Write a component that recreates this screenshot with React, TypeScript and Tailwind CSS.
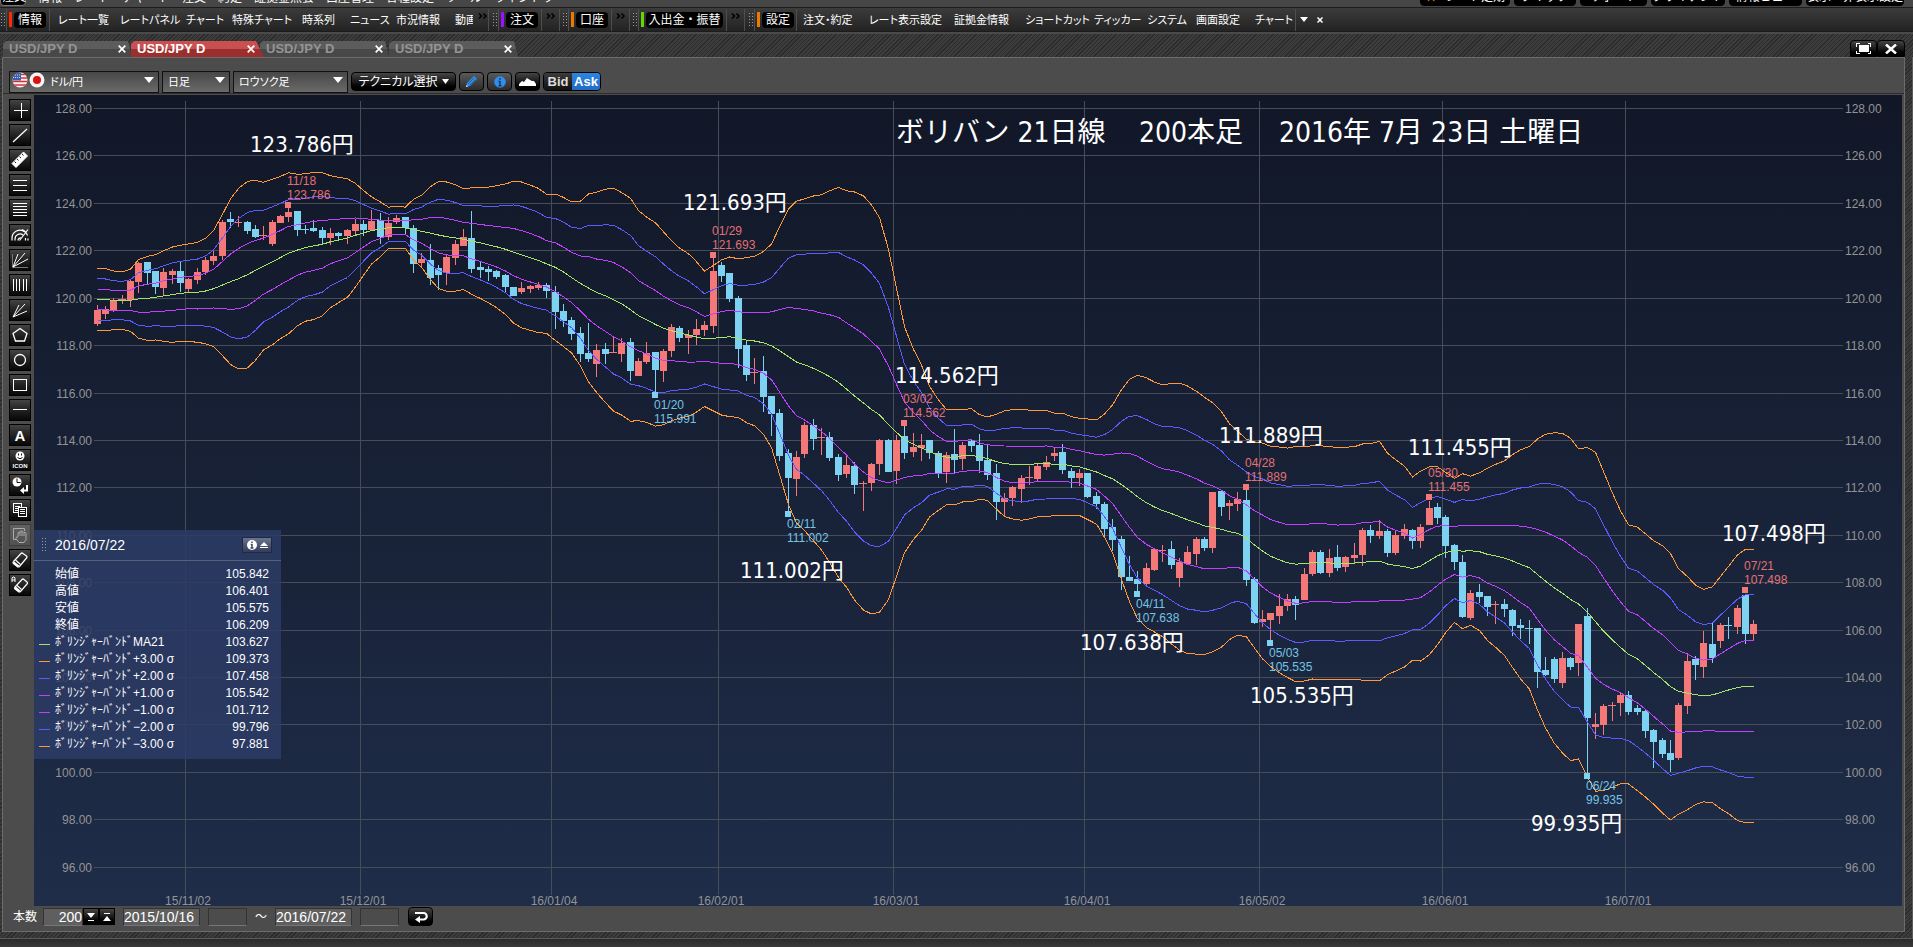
import { ReactNode } from 'react'
import clsx from 'clsx'

// [direction, high, body top, body bottom, low] in canvas pixels, 1 = up day, 0 = down day
type Candle = [number, number, number, number, number]

const CANDLES: Candle[] = [
  [1, 210, 215, 229, 231], [1, 211, 214, 219, 224], [1, 203, 205, 216, 217], [1, 200, 204, 205, 209],
  [1, 185, 186, 205, 212], [1, 167, 168, 187, 198], [0, 167, 167, 178, 189], [0, 176, 176, 192, 199],
  [1, 173, 177, 193, 201], [1, 174, 176, 180, 189], [0, 167, 176, 188, 197], [1, 183, 184, 194, 198],
  [1, 173, 177, 185, 189], [1, 162, 165, 177, 180], [1, 154, 161, 166, 170], [1, 125, 127, 161, 165],
  [0, 117, 124, 127, 133], [1, 121, 127, 128, 132], [0, 126, 127, 136, 139], [0, 130, 134, 142, 143],
  [1, 131, 140, 141, 145], [1, 125, 127, 149, 151], [1, 120, 121, 128, 128], [1, 113, 117, 122, 127],
  [0, 116, 116, 135, 141], [0, 130, 134, 135, 139], [0, 125, 133, 136, 137], [0, 132, 135, 143, 149],
  [1, 133, 138, 143, 150], [0, 137, 138, 141, 144], [1, 134, 135, 141, 149], [1, 124, 129, 136, 140],
  [0, 125, 129, 135, 141], [1, 115, 126, 135, 135], [0, 118, 125, 142, 149], [1, 122, 128, 142, 145],
  [1, 120, 123, 127, 129], [0, 122, 122, 133, 139], [0, 130, 133, 169, 178], [1, 158, 164, 168, 173],
  [0, 149, 165, 183, 190], [0, 170, 173, 180, 195], [1, 160, 162, 178, 190], [1, 145, 149, 163, 170],
  [1, 134, 142, 151, 151], [0, 116, 143, 174, 178], [0, 167, 172, 175, 183], [0, 171, 174, 177, 186],
  [0, 175, 176, 182, 184], [0, 179, 180, 192, 197], [0, 192, 192, 201, 201], [1, 187, 193, 197, 199],
  [1, 190, 191, 194, 198], [1, 187, 190, 193, 195], [0, 188, 190, 196, 203], [0, 191, 197, 217, 234],
  [0, 209, 216, 226, 232], [0, 222, 225, 239, 245], [0, 232, 238, 259, 267], [0, 228, 258, 264, 267],
  [1, 249, 255, 269, 282], [0, 248, 254, 259, 269], [1, 241, 257, 258, 258], [1, 243, 248, 259, 267],
  [0, 243, 247, 276, 286], [1, 263, 266, 281, 281], [1, 247, 258, 267, 269], [0, 257, 257, 275, 298],
  [1, 254, 256, 276, 287], [1, 229, 232, 256, 262], [0, 231, 233, 243, 247], [1, 235, 240, 243, 259],
  [1, 224, 234, 240, 250], [1, 226, 230, 235, 241], [1, 163, 176, 231, 238], [0, 167, 170, 181, 187],
  [0, 178, 178, 204, 207], [0, 201, 203, 254, 273], [0, 245, 250, 280, 286], [1, 263, 277, 278, 289],
  [0, 261, 276, 302, 317], [0, 301, 301, 319, 341], [0, 314, 318, 361, 366], [0, 354, 358, 383, 416],
  [1, 356, 362, 384, 401], [1, 327, 330, 359, 363], [0, 324, 330, 344, 355], [1, 333, 342, 343, 360],
  [0, 337, 342, 363, 366], [0, 359, 362, 380, 386], [1, 359, 370, 379, 383], [0, 367, 371, 390, 399],
  [1, 386, 388, 389, 416], [1, 368, 369, 388, 396], [1, 344, 345, 369, 380], [0, 344, 345, 377, 377],
  [1, 340, 345, 376, 389], [0, 331, 341, 358, 364], [1, 338, 352, 357, 362], [1, 339, 350, 353, 366],
  [0, 345, 345, 358, 364], [0, 356, 358, 378, 383], [1, 357, 360, 377, 388], [0, 334, 359, 365, 378],
  [1, 347, 350, 364, 375], [0, 344, 346, 351, 357], [0, 339, 350, 366, 378], [0, 350, 365, 380, 385],
  [0, 369, 378, 407, 425], [1, 398, 403, 407, 421], [1, 391, 392, 403, 411], [1, 380, 383, 394, 408],
  [1, 371, 382, 383, 390], [1, 369, 371, 384, 386], [1, 361, 367, 372, 375], [1, 353, 358, 361, 366],
  [0, 349, 357, 375, 379], [0, 373, 376, 383, 393], [1, 374, 378, 383, 391], [0, 378, 378, 402, 403],
  [0, 397, 401, 409, 414], [0, 407, 409, 434, 442], [0, 424, 432, 445, 456], [0, 441, 444, 482, 495],
  [0, 461, 482, 486, 486], [0, 476, 484, 489, 496], [1, 468, 473, 489, 490], [1, 453, 454, 475, 476],
  [1, 450, 455, 456, 467], [0, 446, 454, 470, 474], [1, 463, 467, 483, 492], [1, 451, 457, 469, 470],
  [1, 442, 444, 459, 470], [0, 442, 444, 453, 456], [1, 397, 397, 453, 458], [0, 395, 396, 412, 421],
  [1, 405, 408, 411, 425], [1, 397, 404, 409, 416], [0, 395, 405, 485, 491], [0, 482, 484, 528, 529],
  [1, 515, 524, 527, 532], [1, 518, 518, 525, 545], [1, 499, 511, 521, 529], [1, 499, 504, 511, 516],
  [0, 501, 504, 510, 525], [1, 473, 479, 505, 505], [1, 455, 457, 479, 481], [0, 455, 457, 478, 479],
  [1, 454, 463, 478, 482], [0, 450, 462, 473, 476], [1, 461, 462, 472, 477], [1, 448, 460, 463, 468],
  [1, 433, 435, 460, 471], [0, 430, 435, 441, 448], [1, 425, 436, 441, 444], [0, 434, 436, 458, 462],
  [1, 435, 440, 458, 460], [1, 429, 434, 441, 444], [0, 434, 435, 446, 454], [1, 429, 432, 446, 453],
  [1, 406, 413, 430, 430], [0, 408, 412, 423, 429], [0, 420, 422, 451, 463], [0, 449, 450, 467, 475],
  [0, 460, 467, 522, 523], [1, 495, 498, 523, 525], [0, 489, 497, 502, 508], [0, 501, 501, 512, 521],
  [1, 506, 509, 510, 529], [0, 504, 509, 514, 522], [0, 514, 515, 531, 541], [0, 524, 530, 533, 544],
  [0, 525, 533, 534, 549], [0, 533, 533, 577, 593], [0, 562, 575, 580, 581], [0, 562, 564, 584, 588],
  [1, 557, 563, 588, 593], [0, 562, 563, 572, 575], [1, 529, 529, 568, 581], [0, 513, 521, 623, 679],
  [1, 618, 629, 632, 644], [1, 609, 611, 630, 640], [1, 607, 610, 611, 626], [1, 597, 600, 608, 621],
  [0, 596, 600, 617, 620], [0, 610, 613, 617, 620], [0, 615, 616, 636, 643], [0, 634, 635, 647, 673],
  [0, 643, 645, 659, 663], [0, 645, 658, 665, 677], [1, 608, 610, 663, 665], [1, 558, 566, 611, 619],
  [0, 561, 564, 570, 585], [1, 536, 548, 572, 583], [0, 528, 549, 563, 568], [1, 528, 530, 546, 553],
  [0, 522, 530, 531, 544], [1, 510, 513, 532, 539], [0, 499, 500, 539, 549], [1, 525, 529, 539, 545],
]

// the first 20 bars have no full 21 day history: [average, sigma * 3]
const LEAD: [number, number][] = [
  [204.3, 31], [204.7, 31], [205.3, 29.3], [205.5, 28.8], [205.3, 31], [204, 39.3], [203.3, 42],
  [202.3, 42.7], [201, 45.3], [199.7, 47.7], [198.3, 48], [197.7, 48.7], [197.3, 50], [196, 52.7],
  [193.7, 58], [190, 70.7], [186.7, 82.7], [183.7, 90.3], [179.7, 93.3], [175.3, 90],
]

const PERIOD = 21
const xOf = (i: number) => Math.floor(63.3 + i * 8.324)
const yOf = (price: number) => Math.round(13 + (128 - price) * 23.71)

const BANDS = CANDLES.map((_, i) => {
  if (i < LEAD.length) return { ma: LEAD[i][0], sigma: LEAD[i][1] / 3 }
  const closes = CANDLES.slice(i - PERIOD + 1, i + 1).map((c) => (c[0] ? c[2] + 0.5 : c[3] - 0.5))
  const ma = closes.reduce((a, b) => a + b, 0) / PERIOD
  const variance = closes.reduce((a, b) => a + (b - ma) ** 2, 0) / PERIOD
  return { ma, sigma: Math.sqrt(variance) }
})

const LINES = [
  { k: 3, color: '#ff9838' },
  { k: -3, color: '#ff9838' },
  { k: 2, color: '#5b5bff' },
  { k: -2, color: '#5b5bff' },
  { k: 1, color: '#c040ff' },
  { k: -1, color: '#c040ff' },
  { k: 0, color: '#a4e468' },
]

const PRICES = [128, 126, 124, 122, 120, 118, 116, 114, 112, 110, 108, 106, 104, 102, 100, 98, 96]

const MONTHS = [
  { x: 151, label: '15/11/02' },
  { x: 326, label: '15/12/01' },
  { x: 517, label: '16/01/04' },
  { x: 684, label: '16/02/01' },
  { x: 859, label: '16/03/01' },
  { x: 1050, label: '16/04/01' },
  { x: 1225, label: '16/05/02' },
  { x: 1408, label: '16/06/01' },
  { x: 1591, label: '16/07/01' },
]

const PEAKS = [
  { i: 23, y: 113, date: '11/18', price: '123.786', high: true },
  { i: 74, y: 163, date: '01/29', price: '121.693', high: true },
  { i: 67, y: 297, date: '01/20', price: '115.991', high: false },
  { i: 83, y: 416, date: '02/11', price: '111.002', high: false },
  { i: 97, y: 331, date: '03/02', price: '114.562', high: true },
  { i: 125, y: 496, date: '04/11', price: '107.638', high: false },
  { i: 138, y: 395, date: '04/28', price: '111.889', high: true },
  { i: 141, y: 545, date: '05/03', price: '105.535', high: false },
  { i: 160, y: 405, date: '05/30', price: '111.455', high: true },
  { i: 179, y: 678, date: '06/24', price: '99.935', high: false },
  { i: 198, y: 498, date: '07/21', price: '107.498', high: true },
]

const NOTES = [
  { x: 216, y: 57, text: '123.786円' },
  { x: 649, y: 115, text: '121.693円' },
  { x: 706, y: 483, text: '111.002円' },
  { x: 861, y: 288, text: '114.562円' },
  { x: 1046, y: 555, text: '107.638円' },
  { x: 1185, y: 348, text: '111.889円' },
  { x: 1374, y: 360, text: '111.455円' },
  { x: 1216, y: 608, text: '105.535円' },
  { x: 1688, y: 446, text: '107.498円' },
  { x: 1497, y: 736, text: '99.935円' },
]

const LEGEND = [
  { label: '始値', value: '105.842', line: '' },
  { label: '高値', value: '106.401', line: '' },
  { label: '安値', value: '105.575', line: '' },
  { label: '終値', value: '106.209', line: '' },
  { label: 'ﾎﾞﾘﾝｼﾞｬｰﾊﾞﾝﾄﾞMA21', value: '103.627', line: 'bg-[#a4e468]' },
  { label: 'ﾎﾞﾘﾝｼﾞｬｰﾊﾞﾝﾄﾞ+3.00 σ', value: '109.373', line: 'bg-[#ff9838]' },
  { label: 'ﾎﾞﾘﾝｼﾞｬｰﾊﾞﾝﾄﾞ+2.00 σ', value: '107.458', line: 'bg-[#5b5bff]' },
  { label: 'ﾎﾞﾘﾝｼﾞｬｰﾊﾞﾝﾄﾞ+1.00 σ', value: '105.542', line: 'bg-[#c040ff]' },
  { label: 'ﾎﾞﾘﾝｼﾞｬｰﾊﾞﾝﾄﾞ−1.00 σ', value: '101.712', line: 'bg-[#c040ff]' },
  { label: 'ﾎﾞﾘﾝｼﾞｬｰﾊﾞﾝﾄﾞ−2.00 σ', value: '99.796', line: 'bg-[#5b5bff]' },
  { label: 'ﾎﾞﾘﾝｼﾞｬｰﾊﾞﾝﾄﾞ−3.00 σ', value: '97.881', line: 'bg-[#ff9838]' },
]

const HATCH = 'bg-[repeating-linear-gradient(135deg,#2b2b2b_0_1px,#3c3c3c_1px_3px)]'
const DARK_BUTTON = 'border border-black bg-linear-to-b from-[#454545] via-[#1c1c1c] to-black text-white'

/* ---------- top bars ---------- */

const TITLE_BUTTONS = [
  { text: 'レート定期', width: 'w-[70px]' },
  { text: 'クイック', width: 'w-[62px]' },
  { text: 'サポート', width: 'w-[67px]' },
  { text: 'クライアント', width: 'w-[74px]' },
  { text: '情報ビュー', width: 'w-[73px]' },
  { text: '表示・非表示設定', width: 'w-[98px]' },
]

function TitleStrip() {
  return (
    <div className="flex h-[7px] items-end justify-between overflow-hidden bg-[#464646] pr-[9px] pb-[1px] text-[12px] leading-[16px] text-white">
      <div className="flex items-end gap-3 whitespace-nowrap">
        <span className="w-[26px] rounded-b-sm border border-[#777] bg-black pl-px">注文</span>
        <span>情報・レート</span>
        <span>チャート</span>
        <span>注文・約定</span>
        <span>証拠金照会</span>
        <span>口座管理</span>
        <span>各種設定</span>
        <span>ツール</span>
        <span>ウィンドウ</span>
      </div>
      <div className="flex items-end gap-1 whitespace-nowrap">
        <span className="w-[90px] rounded-b-sm border border-black bg-black pl-1 text-[12px]">
          <span className="mr-2 text-[#e0a000]">★</span>
          {TITLE_BUTTONS[0].text}
        </span>
        {TITLE_BUTTONS.slice(1).map((b) => (
          <span key={b.text} className={clsx('rounded-b-sm border border-black bg-black text-center text-[12px]', b.width)}>
            {b.text}
          </span>
        ))}
      </div>
    </div>
  )
}

function Grip() {
  return <span className="h-4 w-[6px] shrink-0 bg-[radial-gradient(#9a9a9a_1px,transparent_1px)] bg-[length:3px_3px]" />
}

function Sep({ className }: { className?: string }) {
  return <span className={clsx('h-[22px] w-px shrink-0 bg-[#4e4e4e]', className)} />
}

function Badge({ color, width, children }: { color: string; width: string; children: ReactNode }) {
  return (
    <span className="flex h-4 shrink-0 items-center">
      <span className={clsx('h-[15px] w-[3px]', color)} />
      <button className={clsx('ml-[2px] h-4 rounded-sm bg-black text-center text-[12px] leading-4 text-white', width)}>{children}</button>
    </span>
  )
}

function MenuItem({ width, children }: { width: string; children: ReactNode }) {
  return (
    <button className={clsx("h-5 shrink-0 text-left text-[11px] leading-5 whitespace-nowrap text-white [font-feature-settings:'palt']", width)}>
      {children}
    </button>
  )
}

function More() {
  return (
    <button aria-label="さらに表示" className="mb-2 w-[10px] shrink-0">
      <svg viewBox="0 0 10 6" className="h-[6px] w-[10px]" fill="none" stroke="#000" strokeWidth="1.5">
        <path d="M1 .5l2.500 2.500-2.500 2.500M5.500 .5l2.500 2.500-2.500 2.500" />
      </svg>
    </button>
  )
}

function MenuBar() {
  return (
    <div className="flex h-[25px] items-center overflow-hidden border-y border-[#1c1c1c] bg-linear-to-b from-[#3c3c3c] to-[#232323]">
      <Grip />
      <Sep className="mr-[2px]" />
      <Badge color="bg-[#ff2a00]" width="w-8">情報</Badge>
      <Sep className="mr-2 ml-[3px]" />
      <MenuItem width="w-[62px]">レート一覧</MenuItem>
      <MenuItem width="w-[66px]">レートパネル</MenuItem>
      <MenuItem width="w-[46px]">チャート</MenuItem>
      <MenuItem width="w-[70px]">特殊チャート</MenuItem>
      <MenuItem width="w-[48px]">時系列</MenuItem>
      <MenuItem width="w-[46px]">ニュース</MenuItem>
      <MenuItem width="w-[59px]">市況情報</MenuItem>
      <MenuItem width="w-[18px] mr-[5px] overflow-hidden">動画</MenuItem>
      <More />
      <Sep className="mr-[3px]" />
      <Grip />
      <Sep className="mr-[2px]" />
      <Badge color="bg-[#9a12ff]" width="w-8">注文</Badge>
      <Sep className="mr-1 ml-[3px]" />
      <More />
      <Sep className="mr-[2px] ml-[3px]" />
      <Grip />
      <Sep className="mr-[2px]" />
      <Badge color="bg-[#f07800]" width="w-8">口座</Badge>
      <Sep className="mr-1 ml-[3px]" />
      <More />
      <Sep className="mr-[2px] ml-[3px]" />
      <Grip />
      <Sep className="mr-[2px]" />
      <Badge color="bg-[#62d800]" width="w-[77px]">入出金・振替</Badge>
      <Sep className="mr-1 ml-[3px]" />
      <More />
      <Sep className="mr-[3px] ml-[3px]" />
      <Grip />
      <Sep className="mr-[2px]" />
      <Badge color="bg-[#f07800]" width="w-8">設定</Badge>
      <Sep className="mr-[6px] ml-[2px]" />
      <MenuItem width="w-[66px]">注文・約定</MenuItem>
      <MenuItem width="w-[85px]">レート表示設定</MenuItem>
      <MenuItem width="w-[71px]">証拠金情報</MenuItem>
      <MenuItem width="w-[69px]">ショートカット</MenuItem>
      <MenuItem width="w-[53px]">ティッカー</MenuItem>
      <MenuItem width="w-[49px]">システム</MenuItem>
      <MenuItem width="w-[59px]">画面設定</MenuItem>
      <MenuItem width="w-10">チャート</MenuItem>
      <Sep className="mr-1" />
      <button aria-label="メニュー" className="mr-[9px] shrink-0">
        <svg viewBox="0 0 8 5" className="h-[5px] w-2" fill="#fff"><path d="M0 0h8L4 5z" /></svg>
      </button>
      <button aria-label="閉じる" className="shrink-0">
        <svg viewBox="0 0 6 6" className="size-[6px]" stroke="#fff" strokeWidth="1.500"><path d="M.5 .5l5 5M5.500 .5l-5 5" /></svg>
      </button>
    </div>
  )
}

function Tab({ active }: { active?: boolean }) {
  return (
    <div
      className={clsx(
        'flex h-4 items-center justify-between pl-[6px] [clip-path:polygon(0_3px,3px_0,125px_0,100%_100%,0_100%)]',
        active
          ? 'z-10 -ml-[1px] w-[133px] bg-linear-to-b from-[#c85050] from-50% to-[#9c2e2e] to-50% pr-[9px]'
          : 'w-[129px] bg-linear-to-b from-[#5c5c5c] from-50% to-[#484848] to-50% pr-[6px]',
      )}
    >
      <button className={clsx('text-[13px] leading-4 font-bold', active ? 'text-white' : 'text-[#949494]')}>USD/JPY D</button>
      <button aria-label="タブを閉じる">
        <svg viewBox="0 0 8 8" className="size-2" stroke="#fff" strokeWidth="1.700"><path d="M.7 .7l6.600 6.600M7.300 .7L.7 7.300" /></svg>
      </button>
    </div>
  )
}

function TabBar() {
  return (
    <div className={clsx('flex h-[23px] items-end justify-between pr-2 pl-[3px]', HATCH)}>
      <div className="flex items-end">
        <Tab />
        <Tab active />
        <div className="-ml-[4px] flex">
          <Tab />
          <Tab />
        </div>
      </div>
      <div className="flex">
        <button aria-label="最大化" className={clsx('flex h-[17px] w-[27px] items-center justify-center rounded-t-sm', DARK_BUTTON)}>
          <svg viewBox="0 0 15 11" className="h-[11px] w-[15px]" fill="none" stroke="#fff" shapeRendering="crispEdges">
            <path d="M.5 3.500v-3h3M11.500 .5h3v3M14.500 7.500v3h-3M3.500 10.500h-3v-3" />
            <path d="M2.500 2h10v7h-10z" fill="#fff" stroke="none" />
          </svg>
        </button>
        <button aria-label="閉じる" className={clsx('flex h-[17px] w-[28px] items-center justify-center rounded-t-sm', DARK_BUTTON)}>
          <svg viewBox="0 0 12 10" className="h-[10px] w-3" stroke="#fff" strokeWidth="2.500"><path d="M1 .5l10 9M11 .5l-10 9" /></svg>
        </button>
      </div>
    </div>
  )
}

/* ---------- chart options ---------- */

function Dropdown({ label, value, width, pad = 'pl-[5px]', children }: { label: string; value: string; width: string; pad?: string; children?: ReactNode }) {
  return (
    <div className={clsx('relative h-[22px]', width)}>
      <select
        aria-label={label}
        defaultValue={value}
        className={clsx("size-full appearance-none border border-[#111] bg-linear-to-b from-[#474747] to-[#6a6a6a] text-[11px] leading-5 text-white [font-feature-settings:'palt']", pad)}
      >
        <option>{value}</option>
      </select>
      {children}
      <svg viewBox="0 0 10 6" className="pointer-events-none absolute top-2 right-[5px] h-[6px] w-[10px]" fill="#fff"><path d="M0 0h10L5 6z" /></svg>
    </div>
  )
}

function Flags() {
  return (
    <svg viewBox="0 0 34 16" className="pointer-events-none absolute top-[3px] left-[3px] h-4 w-[34px]">
      <defs>
        <clipPath id="us"><circle cx="8" cy="8" r="7.500" /></clipPath>
      </defs>
      <g clipPath="url(#us)">
        <rect width="16" height="16" fill="#f4f4f4" />
        <path d="M0 2.500h16M0 6h16M0 9.500h16M0 13h16" stroke="#e03030" strokeWidth="1.700" />
        <rect width="9" height="8.500" fill="#3b5fb0" />
        <path d="M1 3h8M1 5.500h8" stroke="#c9d6f5" strokeDasharray="1 1" />
      </g>
      <circle cx="25" cy="8" r="7.500" fill="#f4f4f4" />
      <circle cx="25" cy="8" r="4" fill="#e01010" />
    </svg>
  )
}

function OptionsBar() {
  const square = clsx('flex h-[19px] w-[25px] items-center justify-center rounded-sm', DARK_BUTTON)
  const lit = 'flex h-[19px] w-[25px] items-center justify-center rounded-sm border border-black bg-linear-to-b from-[#5a5a5a] to-[#2c2c2c]'
  return (
    <div className="flex h-9 items-end gap-[3px] border-t border-[#6c6c6c] pb-[2px] pl-[6px]">
      <Dropdown label="通貨ペア" value="ドル/円" width="w-[150px]" pad="pl-[40px]">
        <Flags />
      </Dropdown>
      <Dropdown label="足種" value="日足" width="w-[68px]" />
      <Dropdown label="チャート種類" value="ロウソク足" width="w-[115px]" />
      <button className={clsx("flex h-[19px] w-[105px] items-center justify-center gap-1 rounded-sm text-[12px] leading-4 whitespace-nowrap [font-feature-settings:'palt']", DARK_BUTTON)}>
        テクニカル選択
        <svg viewBox="0 0 7 5" className="h-[5px] w-[7px]" fill="#fff"><path d="M0 0h7L3.500 5z" /></svg>
      </button>
      <button aria-label="描画" className={lit}>
        <svg viewBox="0 0 13 13" className="size-[13px]">
          <path d="M1 12l1-4 7-7 3 3-7 7z" fill="#2f8fea" />
          <path d="M3 9l6-6M4.500 10.500l6-6" stroke="#124a86" strokeWidth=".7" />
          <path d="M1 12l.6-2 1.400 1.400z" fill="#dfefff" />
        </svg>
      </button>
      <button aria-label="情報" className={lit}>
        <svg viewBox="0 0 12 12" className="size-3">
          <circle cx="6" cy="6" r="5.800" fill="#2f8fea" />
          <path d="M6 2v1.800M6 5v5M4.500 5.500H6M4.500 9.800h3" stroke="#16345c" strokeWidth="1.400" />
        </svg>
      </button>
      <button aria-label="エリア表示" className={square}>
        <svg viewBox="0 0 17 8" className="h-2 w-[17px]" fill="#fff"><path d="M0 8V6l3-3 2 1 3-4 3 2 2 1 2 0 2 3v2z" /></svg>
      </button>
      <div className="flex h-[19px] overflow-hidden rounded-sm border border-black text-[13px] leading-4 font-bold">
        <button className="w-7 bg-linear-to-b from-[#3c3c3c] to-[#111] text-[#ddd]">Bid</button>
        <button className="w-7 bg-linear-to-b from-[#2b86e0] to-[#1f6cc8] text-white">Ask</button>
      </div>
    </div>
  )
}

/* ---------- drawing tools ---------- */

const TOOLS: { name: string; icon: ReactNode; disabled?: boolean }[] = [
  { name: '十字', icon: <path d="M5 11.500h14M12.500 4v15" /> },
  { name: 'ライン', icon: <path d="M4 18L18 5" shapeRendering="auto" strokeWidth="1.300" /> },
  {
    name: '定規',
    icon: (
      <g shapeRendering="auto">
        <path d="M3 14.500L14.500 3l4 4L7 18.500z" fill="#fff" />
        <path d="M5.500 12.500l1.500 1.500M8 10l1.500 1.500M10.500 7.500l1.500 1.500M13 5l1.500 1.500" stroke="#222" />
      </g>
    ),
  },
  { name: '三本線', icon: <path d="M4 6.500h14M4 11.500h14M4 16.500h14" /> },
  { name: '五本線', icon: <path d="M4 4.500h14M4 7.500h14M4 10.500h14M4 13.500h14M4 16.500h14" /> },
  {
    name: 'アーク',
    icon: (
      <g shapeRendering="auto">
        <path d="M3 16.500v-2a8 8 0 0 1 13-6.500M19 14.500v2M6 16.500v-1.500a5 5 0 0 1 8-4M16.500 14v2.500M9 16.500a2.500 2.500 0 0 1 3-2.500" strokeWidth="1.200" />
        <path d="M10.500 16.500L19 5.500M13 5.500q4 1.500 5.500 6" strokeWidth="1.200" />
      </g>
    ),
  },
  {
    name: 'ファン',
    icon: (
      <g shapeRendering="auto">
        <path d="M3.500 5v13.500H19" stroke="#777" />
        <path d="M4 18L9 5M4 18L16 4M4 18L19 10" />
      </g>
    ),
  },
  { name: '縦線', icon: <path d="M4.500 5v12M7.500 5v12M10.500 5v12M14.500 5v12M17.500 5v12" /> },
  { name: 'スピード', icon: <path d="M4 18L10 6M4 18L16 5M4 18L18 12" shapeRendering="auto" /> },
  { name: '五角形', icon: <path d="M11 4.500l7 5-2.500 7.500h-9L4 9.500z" shapeRendering="auto" strokeWidth="1.300" /> },
  { name: '円', icon: <circle cx="11" cy="11" r="5.500" shapeRendering="auto" strokeWidth="1.300" /> },
  { name: '四角', icon: <rect x="4.500" y="5.500" width="13" height="11" /> },
  { name: '水平線', icon: <path d="M4 10.500h14" /> },
  {
    name: 'テキスト',
    icon: (
      <text x="11" y="17" textAnchor="middle" fontSize="15" fontWeight="bold" fill="#fff" stroke="none">
        A
      </text>
    ),
  },
  {
    name: 'アイコン',
    icon: (
      <g shapeRendering="auto">
        <circle cx="11" cy="7" r="4.500" fill="#fff" stroke="none" />
        <path d="M9.500 4.500v2M12.500 4.500v2M8.500 8.500q2.500 2.500 5 0" stroke="#111" />
        <text x="11" y="19" textAnchor="middle" fontSize="6" fontWeight="bold" fill="#fff" stroke="none">
          ICON
        </text>
      </g>
    ),
  },
  {
    name: '時間',
    icon: (
      <g shapeRendering="auto">
        <circle cx="8" cy="8" r="4.500" fill="#fff" stroke="none" />
        <path d="M8 4.500v4h3.500" stroke="#111" />
        <path d="M18 11v5.500h-4" strokeWidth="2" />
        <path d="M15 13v7l-4-3.500z" fill="#fff" stroke="none" />
      </g>
    ),
  },
  {
    name: 'コピー',
    icon: (
      <g>
        <path d="M4.500 4.500h8v9h-8zM6 7.500h5M6 9.500h5M6 11.500h5" />
        <path d="M9.500 8.500h8v9h-8z" fill="#111" />
        <path d="M11 10.500h5M11 12.500h5M11 14.500h5" />
      </g>
    ),
  },
  {
    name: '移動',
    disabled: true,
    icon: (
      <g stroke="#aaa" shapeRendering="auto">
        <path d="M8 15.500H4.500v-11h11V7" />
        <path d="M9 12.500V9q1-1.500 2 0V7.500q1-1.500 2 0V8q1.200-1.500 2 .5 1.500-1 2 1v6l-2 3h-5l-3-4q-.5-2 2-1.500zM11 9v3M13 8v4M15 8.500V12" fill="#555" />
      </g>
    ),
  },
  {
    name: '消しゴム',
    icon: (
      <g shapeRendering="auto" strokeWidth="1.200">
        <path d="M4.500 12.500L12 4.500q1-1 2 0l3.500 2.500q1 1 0 2L10.500 17.500q-1 1-2 0L4.500 14.500q-1-1 0-2z" />
        <path d="M4.500 13.500l5 4" strokeWidth="2.500" />
        <path d="M6.500 11l5 4.500" />
      </g>
    ),
  },
  {
    name: '全消去',
    icon: (
      <g shapeRendering="auto" strokeWidth="1.200">
        <path d="M6 13L13 5.500q1-1 2 0l3 2.500q1 1 0 2L11.500 17.500q-1 1-2 0L6 15q-1-1 0-2z" />
        <path d="M6 13.500l4.500 4" strokeWidth="2.500" />
        <path d="M8 11.500l4.500 4" />
        <path d="M3 8V4l1-1h1l1 1v4M3 6h3" strokeWidth="1" />
      </g>
    ),
  },
]

function ToolColumn() {
  return (
    <div className="flex w-[31px] shrink-0 flex-col gap-[3px] pt-1 pl-[6px]">
      {TOOLS.map((t) => (
        <button
          key={t.name}
          aria-label={t.name}
          disabled={t.disabled}
          className={clsx('size-[22px] border', t.disabled ? 'border-[#3c3c3c] bg-linear-to-b from-[#606060] to-[#525252]' : 'border-black bg-linear-to-b from-[#444] via-[#222] to-[#080808]')}
        >
          <svg viewBox="1 1 20 20" className="size-5" fill="none" stroke="#fff" shapeRendering="crispEdges">
            {t.icon}
          </svg>
        </button>
      ))}
    </div>
  )
}

/* ---------- chart ---------- */

function Chart() {
  return (
    <svg viewBox="0 0 1868 811" className="block h-auto w-full" role="img" aria-label="USD/JPY 日足">
      <g fill="#474c59" shapeRendering="crispEdges">
        {PRICES.map((p) => (
          <rect key={p} x="60" y={yOf(p)} width="1749" height="1" />
        ))}
        {MONTHS.map((m) => (
          <rect key={m.x} x={m.x} y="6" width="1" height="794" />
        ))}
      </g>

      <g fill="#949494" fontSize="12">
        {PRICES.map((p) => (
          <text key={p} x="58" y={yOf(p) + 5} textAnchor="end">{p.toFixed(2)}</text>
        ))}
        {PRICES.map((p) => (
          <text key={p} x="1811" y={yOf(p) + 5}>{p.toFixed(2)}</text>
        ))}
        {MONTHS.map((m) => (
          <text key={m.x} x={m.x + 3} y="810" textAnchor="middle">{m.label}</text>
        ))}
      </g>

      <g shapeRendering="crispEdges">
        {CANDLES.map(([up, high, top, bottom, low], i) => (
          <g key={i} fill={up ? '#f47878' : '#7dd2f2'}>
            <rect x={xOf(i)} y={high} width="1" height={low - high} />
            <rect x={bottom - top > 1 ? xOf(i) - 3 : xOf(i) - 4} y={top} width={bottom - top > 1 ? 7 : 8} height={bottom - top} />
          </g>
        ))}
      </g>

      <g fill="none" shapeRendering="crispEdges">
        {LINES.map((l) => (
          <polyline key={l.k} stroke={l.color} points={BANDS.map((b, i) => `${xOf(i) + 0.5},${(b.ma - l.k * b.sigma).toFixed(1)}`).join(' ')} />
        ))}
      </g>

      {PEAKS.map((p) => {
        const x = xOf(p.i)
        return (
          <g key={p.date} fill={p.high ? '#f47878' : '#7dd2f2'} fontSize="12">
            <rect x={x - 3} y={p.high ? p.y - 6 : p.y} width="6" height="6" shapeRendering="crispEdges" />
            <g opacity=".92">
              <text x={x - 1} y={p.high ? p.y - 23 : p.y + 17}>{p.date}</text>
              <text x={x - 1} y={p.high ? p.y - 9 : p.y + 31}>{p.price}</text>
            </g>
          </g>
        )
      })}

      <g fill="#fff" className="font-['DejaVu_Sans_Condensed','Noto_Sans_CJK_JP',sans-serif]">
        {NOTES.map((n) => (
          <text key={n.text} x={n.x} y={n.y} fontSize="22">{n.text}</text>
        ))}
        <g fontSize="28">
          <text x="862" y="47">ボリバン 21日線</text>
          <text x="1105" y="47">200本足</text>
          <text x="1245" y="47">2016年 7月 23日 土曜日</text>
        </g>
      </g>
    </svg>
  )
}

function Legend() {
  return (
    <section className="absolute top-[435px] left-0 w-[247px] bg-[#2d3c66]/85 pb-[6px] text-white">
      <header className="flex h-[31px] items-center border-b border-[#56617e] pr-[9px] pl-[7px]">
        <Grip />
        <span className="ml-2 flex-1 text-[14px]">2016/07/22</span>
        <button aria-label="詳細を閉じる" className="flex h-4 w-[30px] items-center justify-center gap-[3px] border border-[#20293f] bg-linear-to-b from-[#6a7490] to-[#333d5a]">
          <svg viewBox="0 0 10 10" className="size-[10px]">
            <circle cx="5" cy="5" r="5" fill="#fff" />
            <path d="M5 1.500v1.500M5 4v4M3.800 4.500H5M3.500 8h3" stroke="#333d5a" strokeWidth="1.400" />
          </svg>
          <svg viewBox="0 0 8 6" className="h-[6px] w-2" fill="#fff"><path d="M0 4l4-4 4 4zM0 5h8v1H0z" /></svg>
        </button>
      </header>
      <table className="mt-[5px] w-full text-[12px]">
        <tbody>
          {LEGEND.map((row) => (
            <tr key={row.label} className="h-[17px]">
              <td className="w-[21px] p-0 pl-[5px]">{row.line && <span className={clsx('mt-1 block h-px w-[11px]', row.line)} />}</td>
              <th scope="row" className="p-0 text-left leading-[17px] font-normal whitespace-nowrap">{row.label}</th>
              <td className="p-0 pr-3 text-right leading-[17px]">{row.value}</td>
            </tr>
          ))}
        </tbody>
      </table>
    </section>
  )
}

/* ---------- bottom bar ---------- */

function RangeBar() {
  const field = 'h-[18px] border border-[#333] border-b-[#777] text-[14px] leading-4 text-white'
  return (
    <form className="flex h-[26px] items-center border-b border-[#6c6c6c] pb-[4px] pl-[10px] text-[12px] text-white" onSubmit={(e) => e.preventDefault()}>
      <label htmlFor="count" className="w-[30px]">本数</label>
      <input id="count" defaultValue="200" className={clsx(field, 'w-10 bg-[#5f5f5f] text-right')} />
      <button type="button" aria-label="減らす" className={clsx('flex h-[17px] w-4 items-center justify-center', DARK_BUTTON)}>
        <svg viewBox="0 0 8 8" className="size-2" fill="#fff"><path d="M0 0h8L4 5zM1 7h6v1H1z" /></svg>
      </button>
      <button type="button" aria-label="増やす" className={clsx('flex h-[17px] w-4 items-center justify-center', DARK_BUTTON)}>
        <svg viewBox="0 0 8 8" className="size-2" fill="#fff"><path d="M0 8h8L4 3zM1 0h6v1H1z" /></svg>
      </button>
      <input aria-label="開始日" defaultValue="2015/10/16" className={clsx(field, 'ml-2 w-[77px] bg-[#5f5f5f]')} />
      <input aria-label="開始時刻" className={clsx(field, 'ml-2 w-[39px]')} />
      <span className="w-7 text-center">～</span>
      <input aria-label="終了日" defaultValue="2016/07/22" className={clsx(field, 'w-[77px] bg-[#5f5f5f]')} />
      <input aria-label="終了時刻" className={clsx(field, 'ml-2 w-[39px]')} />
      <button aria-label="更新" className={clsx('ml-[9px] flex h-[19px] w-[25px] items-center justify-center rounded-sm', DARK_BUTTON)}>
        <svg viewBox="0 0 14 12" className="h-3 w-[14px]" fill="none" stroke="#fff" strokeWidth="2.200">
          <path d="M1 2h8.500a3 3 0 0 1 0 6.500H5" />
          <path d="M6 5v7L1 8.500z" fill="#fff" stroke="none" />
        </svg>
      </button>
    </form>
  )
}

export default function App() {
  return (
    <main className="min-h-screen w-full overflow-x-hidden bg-[#3a3a3a] font-['Liberation_Sans','Noto_Sans_CJK_JP',sans-serif]">
      <TitleStrip />
      <MenuBar />
      <div className="h-[2px] bg-[#4a4a4a]" />
      <TabBar />
      <div className={clsx('border-r border-[#5a5a5a] pr-[7px] pb-[6px] pl-[2px]', HATCH)}>
        <div className="border-x border-[#6c6c6c] bg-[#4c4c4c]">
          <OptionsBar />
          <div className="flex border-t border-[#2c2c2c] pr-[2px] pt-px">
            <ToolColumn />
            <div className="relative min-w-0 flex-1 self-start bg-linear-to-b from-[#111727] to-[#1f2d49]">
              <Chart />
              <Legend />
            </div>
          </div>
          <RangeBar />
        </div>
      </div>
      <footer className="h-[9px] border-t border-[#5a5a5a] bg-linear-to-b from-[#2b2b2b] to-[#3a3a3a]" />
    </main>
  )
}
